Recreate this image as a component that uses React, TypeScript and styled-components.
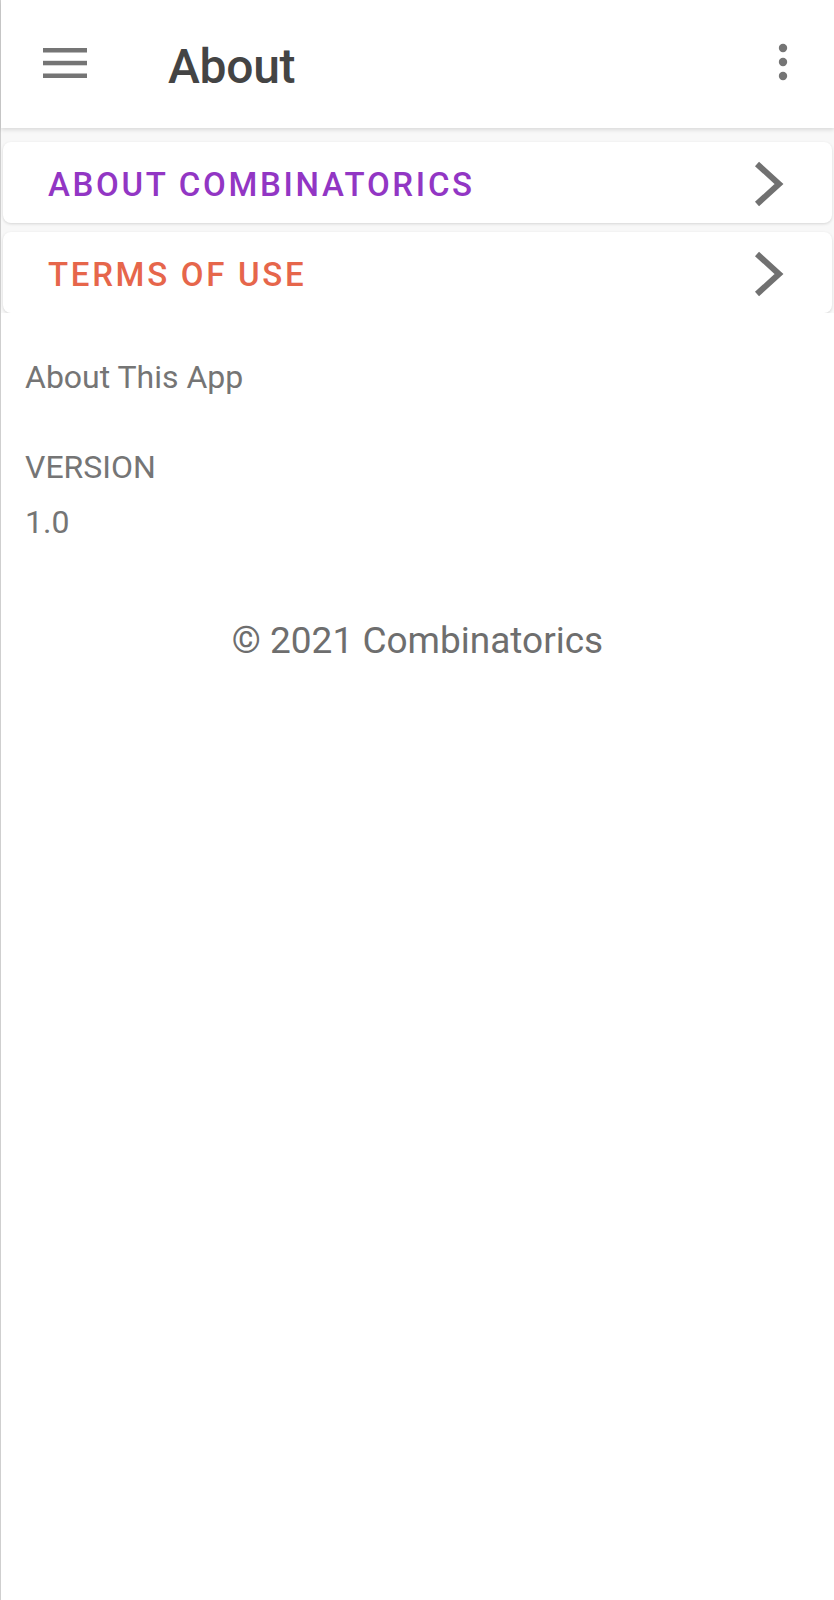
import { FC } from 'react';
import styled, { createGlobalStyle } from 'styled-components';

const GlobalStyle = createGlobalStyle`
  html, body {
    margin: 0;
    padding: 0;
    background: #ffffff;
  }
  body {
    font-family: Roboto, "Liberation Sans", sans-serif;
    -webkit-font-smoothing: antialiased;
  }
`;

const Screen = styled.div`
  min-height: 1600px;
  box-sizing: border-box;
  border-left: 1px solid #cfcfcf;
  background: #ffffff;
  display: flex;
  flex-direction: column;
`;

const Toolbar = styled.header`
  height: 128px;
  display: flex;
  align-items: center;
  background: #ffffff;
  box-shadow: 0 2px 4px rgba(0, 0, 0, 0.12);
  position: relative;
  z-index: 1;
  padding: 0 0 0 42px;

  .menu {
    width: 44px;
    height: 30px;
    margin-top: -2px;
  }

  .more {
    width: 10px;
    height: 40px;
    margin: -2px 46px 0 auto;
  }
`;

const Title = styled.h1`
  margin: 0 0 0 81px;
  font-size: 48px;
  font-weight: 500;
  color: #444444;
  letter-spacing: -0.3px;
  line-height: 1;
  padding-top: 6px;
`;

const CardList = styled.div`
  display: flex;
  flex-direction: column;
  gap: 9px;
  padding: 14px 2px 0 2px;
  background: #f8f8f8;
`;

const Card = styled.button<{ $tone: string }>`
  all: unset;
  box-sizing: border-box;
  height: 81px;
  display: flex;
  align-items: center;
  justify-content: space-between;
  padding: 3px 48px 0 45px;
  background: #ffffff;
  border-radius: 8px;
  box-shadow: 0 1px 3px rgba(0, 0, 0, 0.14);
  color: ${(p) => p.$tone};
  font-family: Roboto, "Liberation Sans", sans-serif;
  font-size: 33px;
  font-weight: 500;
  letter-spacing: 2.7px;
  text-transform: uppercase;

  svg {
    width: 30px;
    height: 46px;
    color: #717171;
  }
`;

const Content = styled.section`
  display: flex;
  flex-direction: column;
  padding: 44px 24px 0 24px;
  background: #ffffff;
`;

const BodyText = styled.p<{ $gap?: number }>`
  margin: ${(p) => p.$gap ?? 0}px 0 0 0;
  font-size: 32px;
  line-height: 40px;
  color: #757575;
`;

const Copyright = styled.p`
  margin: 77px 0 0 0;
  text-align: center;
  font-size: 37px;
  line-height: 44px;
  color: #6e6e6e;
`;

const Chevron: FC = () => (
  <svg viewBox="0 0 30 46" fill="none">
    <path d="M3 3 L25 23 L3 43" stroke="currentColor" strokeWidth="6" strokeLinejoin="miter" />
  </svg>
);

const items = [
  { label: 'About Combinatorics', tone: '#9236c4' },
  { label: 'Terms of Use', tone: '#e6664b' },
];

export default function App() {
  return (
    <>
      <GlobalStyle />
      <Screen>
        <Toolbar>
          <svg className="menu" viewBox="0 0 44 30" fill="#757575">
            <rect x="0" y="0" width="44" height="4.5" />
            <rect x="0" y="12.8" width="44" height="4.5" />
            <rect x="0" y="25.5" width="44" height="4.5" />
          </svg>
          <Title>About</Title>
          <svg className="more" viewBox="0 0 10 40" fill="#757575">
            <circle cx="5" cy="5" r="4.2" />
            <circle cx="5" cy="19" r="4.2" />
            <circle cx="5" cy="33" r="4.2" />
          </svg>
        </Toolbar>
        <CardList>
          {items.map((it) => (
            <Card key={it.label} $tone={it.tone}>
              <span>{it.label}</span>
              <Chevron />
            </Card>
          ))}
        </CardList>
        <Content>
          <BodyText>About This App</BodyText>
          <BodyText $gap={50}>VERSION</BodyText>
          <BodyText $gap={15}>1.0</BodyText>
          <Copyright>© 2021 Combinatorics</Copyright>
        </Content>
      </Screen>
    </>
  );
}
